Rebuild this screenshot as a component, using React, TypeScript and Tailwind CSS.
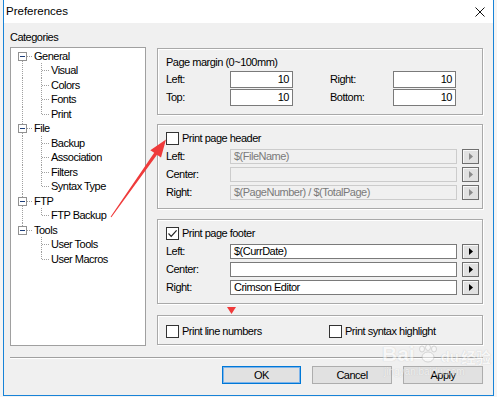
import React from "react";

const tree = [
  { label: "General", children: ["Visual", "Colors", "Fonts", "Print"] },
  { label: "File", children: ["Backup", "Association", "Filters", "Syntax Type"] },
  { label: "FTP", children: ["FTP Backup"] },
  { label: "Tools", children: ["User Tools", "User Macros"] },
];

type Row = { label: string; child: boolean; firstRoot: boolean; lastRoot: boolean; lastChild: boolean };

const rows: Row[] = [];
tree.forEach((node, i) => {
  const firstRoot = i === 0;
  const lastRoot = i === tree.length - 1;
  rows.push({ label: node.label, child: false, firstRoot, lastRoot, lastChild: false });
  node.children.forEach((c, j) => {
    rows.push({ label: c, child: true, firstRoot, lastRoot, lastChild: j === node.children.length - 1 });
  });
});

function TreeRow({ row, h }: { row: Row; h: number }) {
  const dot = { stroke: "#a0a0a0", strokeWidth: 1, strokeDasharray: "1 1" };
  if (!row.child) {
    return (
      <div className={`flex items-center ${h === 14 ? "h-[14px]" : "h-[15px]"}`}>
        <svg width="23" height={h} className="shrink-0">
          {!row.firstRoot && <line x1="11.5" y1="0" x2="11.5" y2="3" {...dot} />}
          {!row.lastRoot && <line x1="11.5" y1="12" x2="11.5" y2={h} {...dot} />}
          <rect x="7.5" y="3.5" width="8" height="8" fill="#fff" stroke="#919191" />
          <line x1="9" y1="7.5" x2="14" y2="7.5" stroke="#1e3f7a" />
          <line x1="16" y1="7.5" x2="22" y2="7.5" {...dot} />
        </svg>
        <span className="leading-none">{row.label}</span>
      </div>
    );
  }
  return (
    <div className={`flex items-center ${h === 14 ? "h-[14px]" : "h-[15px]"}`}>
      <svg width="40" height={h} className="shrink-0">
        {!row.lastRoot && <line x1="11.5" y1="0" x2="11.5" y2={h} {...dot} />}
        <line x1="30.5" y1="0" x2="30.5" y2={row.lastChild ? 8 : h} {...dot} />
        <line x1="31" y1="7.5" x2="39" y2="7.5" {...dot} />
      </svg>
      <span className="leading-none">{row.label}</span>
    </div>
  );
}

function Checkbox({ checked }: { checked?: boolean }) {
  return (
    <span className="w-[13px] h-[13px] shrink-0 border border-[#333333] bg-white flex items-center justify-center">
      {checked && (
        <svg width="11" height="11" viewBox="0 0 11 11">
          <path d="M1.5 5.5 L4.2 8.3 L9.6 2.4" fill="none" stroke="#222" strokeWidth="1.2" />
        </svg>
      )}
    </span>
  );
}

function Field({ value, disabled, wide }: { value: string; disabled?: boolean; wide?: boolean }) {
  return (
    <div
      className={`${wide ? "w-[227px] h-[15px] pl-[3px] justify-start" : "w-[63px] h-[17px] pr-[3px] justify-end"} flex items-center border ${
        disabled ? "border-[#cccccc] bg-[#f0f0f0] text-[#7a7a7a]" : "border-[#7a7a7a] bg-white text-black"
      }`}
    >
      <span className="leading-none">{value}</span>
    </div>
  );
}

function ArrowBtn({ disabled }: { disabled?: boolean }) {
  return (
    <div className="ml-[5px] w-[17px] h-[15px] border border-[#6f6f6f] bg-[#e1e1e1] shadow-[inset_1px_1px_0_#f8f8f8] flex items-center justify-center">
      <svg width="4" height="7" viewBox="0 0 4 7">
        <polygon points="0,0 4,3.5 0,7" fill={disabled ? "#8a8a8a" : "#000"} />
      </svg>
    </div>
  );
}

function HeaderFooterGroup({ title, checked, values, disabled }: { title: string; checked?: boolean; values: string[]; disabled?: boolean }) {
  const labels = ["Left:", "Center:", "Right:"];
  return (
    <div className="h-[85px] border border-[#a9a9a9] shadow-[inset_1px_1px_0_#ffffff,1px_1px_0_#ffffff] pl-[8px] pt-[7px] flex flex-col">
      <div className="h-[13px] flex items-center gap-[3px]">
        <Checkbox checked={checked} />
        <span className="leading-none">{title}</span>
      </div>
      <div className="mt-[4px] flex flex-col gap-[3px]">
        {labels.map((l, i) => (
          <div key={l} className="flex items-center h-[15px]">
            <span className="w-[64px] leading-none">{l}</span>
            <Field value={values[i]} disabled={disabled} wide />
            <ArrowBtn disabled={disabled} />
          </div>
        ))}
      </div>
    </div>
  );
}

export default function App() {
  return (
    <div className="relative w-[497px] h-[397px] overflow-hidden bg-[#f4f4f4] text-[11px] tracking-[-0.5px] text-black font-['Liberation_Sans',Arial,sans-serif]">
      <div className="ml-[3px] w-[491px] h-[396px] border-x border-b border-[#1883d7] flex flex-col">
        {/* title bar */}
        <div className="h-[23px] shrink-0 bg-white flex items-center justify-between pl-[2px] pr-[8px]">
          <span className="text-[11.5px] tracking-normal">Preferences</span>
          <svg width="10" height="10" viewBox="0 0 10 10">
            <path d="M0.5 0.5 L9.5 9.5 M9.5 0.5 L0.5 9.5" stroke="#111" strokeWidth="1" />
          </svg>
        </div>

        <div className="flex-1 bg-[#f0f0f0] flex flex-col">
          <div className="flex">
            {/* categories */}
            <div className="ml-[6px] w-[136px] flex flex-col">
              <div className="mt-[7px] h-[14px] flex items-center leading-none">Categories</div>
              <div className="mt-[3px] h-[299px] border border-[#a0a0a0] bg-white pt-[1px] flex flex-col">
                {rows.map((r, i) => (
                  <TreeRow key={r.label} row={r} h={i % 2 === 0 ? 14 : 15} />
                ))}
              </div>
            </div>

            {/* options */}
            <div className="ml-[11px] w-[326px] mt-[25px] flex flex-col">
              <div className="h-[67px] border border-[#a9a9a9] shadow-[inset_1px_1px_0_#ffffff,1px_1px_0_#ffffff] pl-[8px] pt-[6px] flex flex-col">
                <div className="h-[14px] flex items-center leading-none">Page margin (0~100mm)</div>
                <div className="mt-[2px] flex items-center h-[17px]">
                  <span className="w-[64px] leading-none">Left:</span>
                  <Field value="10" />
                  <span className="ml-[37px] w-[63px] leading-none">Right:</span>
                  <Field value="10" />
                </div>
                <div className="mt-[1px] flex items-center h-[17px]">
                  <span className="w-[64px] leading-none">Top:</span>
                  <Field value="10" />
                  <span className="ml-[37px] w-[63px] leading-none">Bottom:</span>
                  <Field value="10" />
                </div>
              </div>

              <div className="mt-[9px]">
                <HeaderFooterGroup
                  title="Print page header"
                  values={["$(FileName)", "", "$(PageNumber) / $(TotalPage)"]}
                  disabled
                />
              </div>
              <div className="mt-[10px]">
                <HeaderFooterGroup title="Print page footer" checked values={["$(CurrDate)", "", "Crimson Editor"]} />
              </div>

              <div className="mt-[11px] h-[30px] border border-[#a9a9a9] shadow-[inset_1px_1px_0_#ffffff,1px_1px_0_#ffffff] pl-[8px] pt-[9px] flex items-start">
                <div className="w-[163px] h-[13px] flex items-center gap-[3px]">
                  <Checkbox />
                  <span className="leading-none">Print line numbers</span>
                </div>
                <div className="h-[13px] flex items-center gap-[3px]">
                  <Checkbox />
                  <span className="leading-none">Print syntax highlight</span>
                </div>
              </div>
            </div>
          </div>

          {/* separator */}
          <div className="mt-[11px] ml-[6px] w-[473px] h-[2px] border-t border-[#a0a0a0] border-b border-b-white" />

          {/* buttons */}
          <div className="mt-[7px] pr-[10px] flex justify-end gap-[11px]">
            <button className="w-[79px] h-[18px] border border-[#0078d7] bg-[#e1e1e1] shadow-[inset_0_0_0_1px_#7eb4ea] flex items-center justify-center leading-none">
              OK
            </button>
            <button className="w-[80px] h-[18px] border border-[#adadad] bg-[#e1e1e1] flex items-center justify-center leading-none">
              Cancel
            </button>
            <button className="w-[80px] h-[18px] border border-[#adadad] bg-[#e1e1e1] flex items-center justify-center leading-none">
              Apply
            </button>
          </div>
        </div>
      </div>

      {/* annotation: red arrow */}
      <svg className="absolute left-0 top-0 pointer-events-none" width="497" height="397">
        <polygon
          points="111.4,217.3 157,154.7 161,157.6 166,139.5 150.3,150.3 154.2,152.7 110.6,216.7"
          fill="#ef3b3b"
        />
        <polygon points="227,307 236,307 231.5,314" fill="#f03a3a" />
      </svg>

      {/* watermark */}
      <div className="absolute left-[382px] top-[343px] pointer-events-none opacity-50 text-white tracking-normal [text-shadow:0_0_1px_#9a9a9a]">
        <div className="flex items-end gap-[2px] leading-none">
          <span className="text-[21px] font-bold">Bai</span>
          <svg width="22" height="20" viewBox="0 0 22 20">
            <g fill="#fff" stroke="#a8a8a8" strokeWidth="0.8">
              <ellipse cx="5" cy="5" rx="2.5" ry="3" />
              <ellipse cx="11" cy="3.5" rx="2.5" ry="3" />
              <ellipse cx="17" cy="5" rx="2.5" ry="3" />
              <ellipse cx="11" cy="13" rx="6" ry="5" />
            </g>
          </svg>
          <span className="text-[15px] font-bold">du</span>
          <span className="text-[15px] font-bold font-['Noto_Sans_CJK_SC',sans-serif]">经验</span>
        </div>
        <div className="text-[10px] leading-none mt-[3px] ml-[2px]">jingyan.baidu.com</div>
      </div>
    </div>
  );
}
